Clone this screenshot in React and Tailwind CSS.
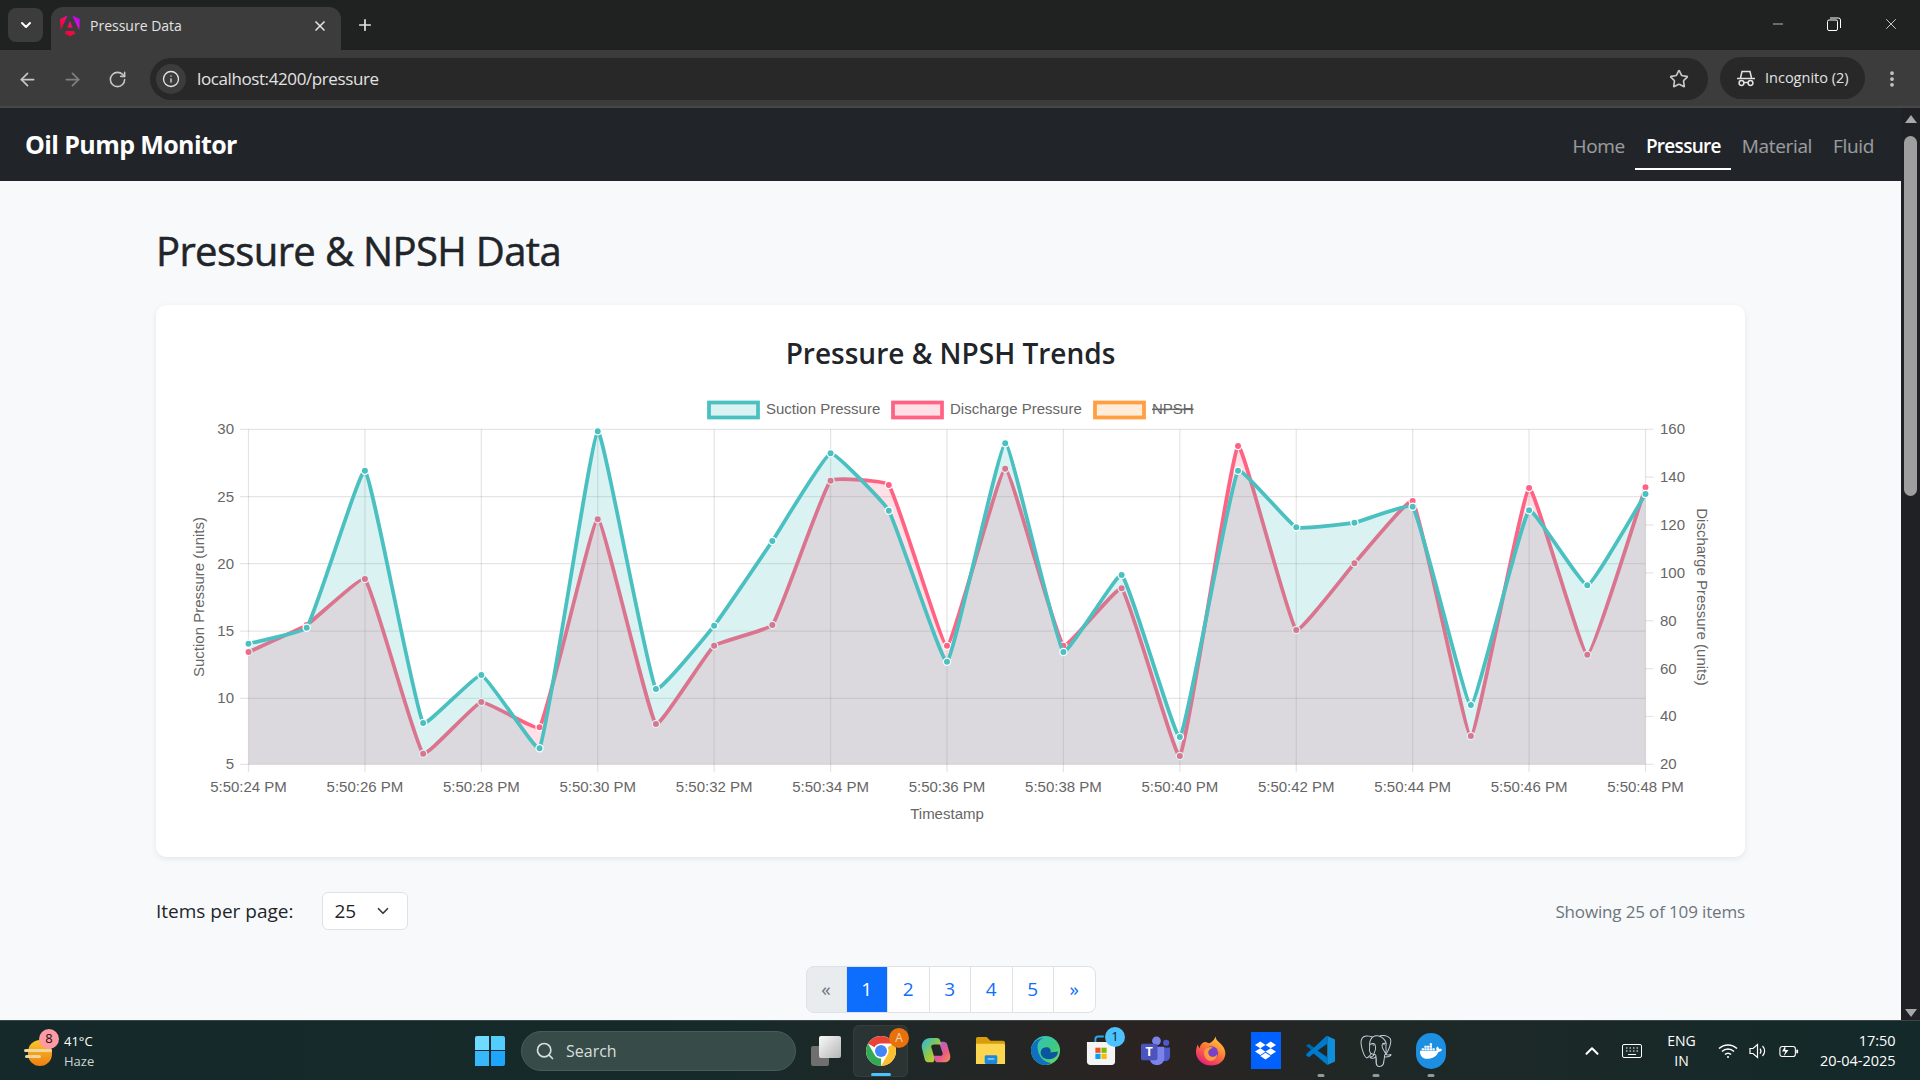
import React from 'react';
import {
  ArrowLeft, ArrowRight, RotateCw, Info, Star, MoreVertical, X, Plus, ChevronDown, ChevronUp, Minus, Search,
} from 'lucide-react';
import { FaDropbox, FaDocker } from 'react-icons/fa';
import { SiPostgresql } from 'react-icons/si';

const suction = [761, 713, 242, 999, 855, 1075, 124, 897, 707, 453, 190, 362, 815, 160, 786, 555, 1041, 242, 412, 398, 350, 945, 361, 586, 312];
const discharge = [786, 705, 567, 1091, 936, 1012, 388, 1002, 767, 705, 272, 285, 767, 236, 767, 595, 1098, 168, 720, 520, 333, 1038, 294, 794, 292];

const LEFT = 248.5;
const RIGHT = 1645.5;
const TOP = 429.3;
const BOTTOM = 764.3;
const STEP = (RIGHT - LEFT) / 24;

const toPoints = (vals) => vals.map((v, i) => [LEFT + i * STEP, 390 + v / 3]);

// same spline as the chart lib, low tension
const linePath = (pts, t = 0.1) => {
  const ctrl = pts.map((p, i) => {
    const a = pts[i - 1] || p;
    const b = pts[i + 1] || p;
    const d01 = Math.hypot(p[0] - a[0], p[1] - a[1]);
    const d12 = Math.hypot(b[0] - p[0], b[1] - p[1]);
    const s = d01 + d12 || 1;
    const fa = (t * d01) / s;
    const fb = (t * d12) / s;
    return {
      prev: [p[0] - fa * (b[0] - a[0]), p[1] - fa * (b[1] - a[1])],
      next: [p[0] + fb * (b[0] - a[0]), p[1] + fb * (b[1] - a[1])],
    };
  });
  let d = `M${pts[0][0]} ${pts[0][1]}`;
  for (let i = 1; i < pts.length; i++) {
    d += ` C${ctrl[i - 1].next[0]} ${ctrl[i - 1].next[1]} ${ctrl[i].prev[0]} ${ctrl[i].prev[1]} ${pts[i][0]} ${pts[i][1]}`;
  }
  return d;
};

const Series = ({ vals, color, fill }) => {
  const pts = toPoints(vals);
  const d = linePath(pts);
  return (
    <g>
      <path d={`${d} L${RIGHT} ${BOTTOM} L${LEFT} ${BOTTOM} Z`} fill={fill} />
      <path d={d} fill="none" stroke={color} strokeWidth="3.75" />
      {pts.map((p, i) => (
        <circle key={i} cx={p[0]} cy={p[1]} r="3.6" fill={color} stroke="#fff" strokeWidth="1.25" />
      ))}
    </g>
  );
};

const Chart = () => {
  const yLeft = [[30, 429.3], [25, 496.7], [20, 563.7], [15, 631], [10, 698.3], [5, 764.3]];
  const yRight = [160, 140, 120, 100, 80, 60, 40, 20].map((v, i) => [v, TOP + (i * (BOTTOM - TOP)) / 7]);
  const xTicks = Array.from({ length: 13 }, (_, i) => [LEFT + i * 2 * STEP, `5:50:${24 + i * 2} PM`]);
  const legend = [
    { x: 707, color: '#4bc0c0', fill: '#dbf2f2', label: 'Suction Pressure', tx: 766 },
    { x: 891, color: '#ff6384', fill: '#ffe0e6', label: 'Discharge Pressure', tx: 950 },
    { x: 1093, color: '#ff9f40', fill: '#ffecd9', label: 'NPSH', tx: 1152, off: true },
  ];
  return (
    <svg viewBox="180 390 1542 455" className="block w-[1542px] h-[455px] font-['Liberation_Sans',sans-serif] text-[15px] fill-[#666]">
      {legend.map((l) => (
        <g key={l.label}>
          <rect x={l.x + 2} y="402.5" width="49" height="15" fill={l.fill} stroke={l.color} strokeWidth="3.75" />
          <text x={l.tx} y="414" className={l.off ? 'line-through' : ''}>{l.label}</text>
        </g>
      ))}
      {yLeft.map(([v, y]) => (
        <g key={v}>
          <line x1={240} x2={RIGHT} y1={y} y2={y} stroke="#000" strokeOpacity="0.1" strokeWidth="1.25" />
          <text x="234" y={y + 5} textAnchor="end">{v}</text>
        </g>
      ))}
      {yRight.map(([v, y]) => (
        <g key={v}>
          <line x1={RIGHT} x2={RIGHT + 8} y1={y} y2={y} stroke="#000" strokeOpacity="0.1" strokeWidth="1.25" />
          <text x="1660" y={y + 5}>{v}</text>
        </g>
      ))}
      {xTicks.map(([x, t]) => (
        <g key={t}>
          <line x1={x} x2={x} y1={TOP} y2={BOTTOM + 8} stroke="#000" strokeOpacity="0.1" strokeWidth="1.25" />
          <text x={x} y="792" textAnchor="middle">{t}</text>
        </g>
      ))}
      <Series vals={discharge} color="#ff6384" fill="rgba(255,99,132,0.2)" />
      <Series vals={suction} color="#4bc0c0" fill="rgba(75,192,192,0.2)" />
      <text x="947" y="819" textAnchor="middle">Timestamp</text>
      <text transform="translate(204 597) rotate(-90)" textAnchor="middle">Suction Pressure (units)</text>
      <text transform="translate(1697 597) rotate(90)" textAnchor="middle">Discharge Pressure (units)</text>
    </svg>
  );
};

const AngularIcon = () => (
  <svg viewBox="0 0 223 236" className="w-[20px] h-[22px]">
    <defs>
      <linearGradient id="ng" x1="0" y1="1" x2="1" y2="0">
        <stop offset="0" stopColor="#e40035" />
        <stop offset="0.45" stopColor="#f60a48" />
        <stop offset="0.7" stopColor="#e90ae3" />
        <stop offset="1" stopColor="#8a0cf0" />
      </linearGradient>
    </defs>
    <path fill="url(#ng)" d="M222.077 39.192l-8.019 125.923L137.387 0l84.69 39.192zm-53.105 162.825l-57.933 33.056-57.934-33.056 11.783-28.556h92.301l11.783 28.556zM111.039 62.675l30.357 73.803H80.681l30.358-73.803zM7.937 165.115L0 39.192 84.69 0 7.937 165.115z" />
  </svg>
);

const IncognitoIcon = () => (
  <svg viewBox="0 0 20 20" className="w-[20px] h-[20px]" fill="none" stroke="#e3e3e3" strokeWidth="1.5">
    <path d="M1 10.5h18" />
    <path d="M4.5 10 6 3.5h8l1.5 6.5" />
    <circle cx="5.5" cy="15" r="2.4" />
    <circle cx="14.5" cy="15" r="2.4" />
    <path d="M8 14.5h4" />
  </svg>
);

const TabBar = () => (
  <div className="h-[50px] bg-[#202221] flex shrink-0">
    <div className="ml-2 mt-2 w-[35px] h-[34px] rounded-lg bg-[#3c3c3c] flex items-center justify-center">
      <ChevronDown className="w-4 h-4 text-white" strokeWidth={3} />
    </div>
    <div className="ml-2 mt-[7px] w-[290px] h-[43px] bg-[#3c3c3c] rounded-t-xl flex items-center pl-[9px] pr-[13px] pb-[6px]">
      <AngularIcon />
      <span className="ml-[10px] text-[14px] text-[#e3e3e3]">Pressure Data</span>
      <X className="ml-auto w-[16px] h-[16px] text-[#e3e3e3]" strokeWidth={2.5} />
    </div>
    <div className="ml-[15px] mt-[16px] w-[18px] h-[18px] flex items-center justify-center">
      <Plus className="w-[18px] h-[18px] text-[#e3e3e3]" strokeWidth={2.25} />
    </div>
    <div className="ml-auto flex items-center h-[48px] text-white pr-[20px]">
      <Minus className="w-[16px] h-[16px] mr-[41px]" strokeWidth={1} />
      <svg viewBox="0 0 14 14" className="w-[14px] h-[14px] mr-[41px]" fill="none" stroke="#fff" strokeWidth="1">
        <rect x="0.5" y="3" width="10" height="10.5" rx="1.5" />
        <path d="M3 1h8.5a2 2 0 0 1 2 2v8" />
      </svg>
      <X className="w-[18px] h-[18px]" strokeWidth={1} />
    </div>
  </div>
);

const Toolbar = () => (
  <div className="h-[58px] bg-[#3c3c3c] shrink-0 flex items-start pt-[8px] border-b-2 border-[#484848]">
    <div className="w-[150px] h-[42px] flex items-center text-[#c7c7c7] pl-[17px]">
      <ArrowLeft className="w-[21px] h-[21px]" strokeWidth={2} />
      <ArrowRight className="ml-[24px] w-[21px] h-[21px] text-[#808080]" strokeWidth={2} />
      <RotateCw className="ml-[25px] w-[19px] h-[19px]" strokeWidth={2} />
    </div>
    <div className="w-[1558px] h-[42px] rounded-full bg-[#282828] flex items-center pl-[6px] pr-[19px]">
      <div className="w-[30px] h-[30px] rounded-full bg-[#3c3c3c] flex items-center justify-center">
        <Info className="w-[18px] h-[18px] text-[#e3e3e3]" strokeWidth={1.75} />
      </div>
      <span className="ml-[11px] text-[17px] tracking-[-0.4px] text-[#e3e3e3]">localhost:4200/pressure</span>
      <Star className="ml-auto w-[20px] h-[20px] text-[#c7c7c7]" strokeWidth={2} />
    </div>
    <div className="ml-[12px] w-[145px] h-[42px] -mt-px rounded-full bg-[#282828] flex items-center pl-[16px]">
      <IncognitoIcon />
      <span className="ml-[9px] text-[14.5px] text-[#e3e3e3]">Incognito (2)</span>
    </div>
    <div className="ml-[17px] h-[42px] flex items-center">
      <MoreVertical className="w-[20px] h-[20px] text-[#c7c7c7]" strokeWidth={2.5} />
    </div>
  </div>
);

const NavBar = () => (
  <nav className="h-[73px] bg-[#212529] flex items-center pl-[25px] pr-[16.5px] shrink-0">
    <span className="text-[25px] tracking-[-0.6px] font-bold text-white">Oil Pump Monitor</span>
    <div className="ml-auto flex h-full pt-[20px] pb-[11px] text-[19px] tracking-[-0.35px] text-white/55">
      <a className="px-[10.5px] leading-[36px]">Home</a>
      <a className="px-[10.5px] leading-[36px] font-semibold tracking-[-0.7px] text-white border-b-2 border-white">Pressure</a>
      <a className="px-[10.5px] leading-[36px]">Material</a>
      <a className="px-[10.5px] leading-[36px]">Fluid</a>
    </div>
  </nav>
);

const PageButton = ({ children, active, disabled, first, last }) => (
  <div
    className={`h-[47px] flex items-center justify-center border border-[#dee2e6] -ml-px first:ml-0 ${first ? 'rounded-l-lg w-[41px]' : 'w-[42.5px]'} ${last ? 'rounded-r-lg' : ''} ${
      active ? 'bg-[#0d6efd] border-[#0d6efd] text-white' : disabled ? 'bg-[#e9ecef] text-[#6c757d]' : 'bg-white text-[#0d6efd]'
    }`}
  >
    {children}
  </div>
);

const Content = () => (
  <main className="flex-1 bg-[#f8f9fa] px-[156px] text-[19px] text-[#212529] overflow-hidden">
    <h2 className="mt-[46px] text-[40px] leading-[48px] tracking-[-0.65px] [-webkit-text-stroke:0.5px_#212529]">Pressure &amp; NPSH Data</h2>
    <section className="mt-[30px] h-[552px] bg-white rounded-[10px] shadow-[0_2px_6px_rgba(0,0,0,0.08)] px-[24px] pt-[28px]">
      <h4 className="text-center text-[28px] leading-[40px] font-semibold">Pressure &amp; NPSH Trends</h4>
      <div className="mt-[17px]">
        <Chart />
      </div>
    </section>
    <div className="mt-[35px] flex items-center h-[38px]">
      <span>Items per page:</span>
      <div className="ml-[29px] w-[86px] h-[38px] bg-white border border-[#dee2e6] rounded-[6px] flex items-center pl-[11px]">
        <span>25</span>
        <ChevronDown className="ml-[18px] w-[18px] h-[18px] text-[#343a40]" strokeWidth={2.25} />
      </div>
      <span className="ml-auto pt-[2px] text-[17px] tracking-[-0.15px] text-[#6c757d]">Showing 25 of 109 items</span>
    </div>
    <div className="mt-[36px] flex justify-center">
      <PageButton disabled first>«</PageButton>
      <PageButton active>1</PageButton>
      <PageButton>2</PageButton>
      <PageButton>3</PageButton>
      <PageButton>4</PageButton>
      <PageButton>5</PageButton>
      <PageButton last>»</PageButton>
    </div>
  </main>
);

const Scrollbar = () => (
  <div className="w-[19px] bg-[#202124] flex flex-col items-center shrink-0">
    <div className="mt-[7px] w-0 h-0 border-x-[6px] border-x-transparent border-b-[8px] border-b-[#a8a8a8]" />
    <div className="mt-[13px] w-[13px] h-[360px] rounded-full bg-[#9e9e9e]" />
    <div className="mt-auto mb-[3px] w-0 h-0 border-x-[6px] border-x-transparent border-t-[8px] border-t-[#a8a8a8]" />
  </div>
);

const ChromeIcon = () => (
  <svg viewBox="0 0 48 48" className="w-[36px] h-[36px]">
    <circle cx="24" cy="24" r="20" fill="#fff" />
    <path fill="#ea4335" d="M6.68 14A20 20 0 0 1 41.32 14H24A10 10 0 0 0 15.34 19Z" />
    <path fill="#fbc02d" transform="rotate(120 24 24)" d="M6.68 14A20 20 0 0 1 41.32 14H24A10 10 0 0 0 15.34 19Z" />
    <path fill="#34a853" transform="rotate(240 24 24)" d="M6.68 14A20 20 0 0 1 41.32 14H24A10 10 0 0 0 15.34 19Z" />
    <circle cx="24" cy="24" r="8" fill="#4285f4" />
  </svg>
);

const CopilotIcon = () => (
  <svg viewBox="0 0 32 32" className="w-[30px] h-[30px]">
    <defs>
      <linearGradient id="cp1" x1="0" y1="0" x2="1" y2="1">
        <stop offset="0" stopColor="#22b8f0" />
        <stop offset="0.5" stopColor="#8cc84b" />
        <stop offset="1" stopColor="#f5c518" />
      </linearGradient>
      <linearGradient id="cp2" x1="0" y1="0" x2="1" y2="1">
        <stop offset="0" stopColor="#8f6de8" />
        <stop offset="0.6" stopColor="#e8598c" />
        <stop offset="1" stopColor="#f59342" />
      </linearGradient>
    </defs>
    <path fill="url(#cp2)" d="M19 6h5c2 0 3.500 1 4 3l3 11c1 4-1 8-5 8h-8c-2 0-3-1-3.500-3l-1-4h7c2 0 3-1 2.500-3z" />
    <path fill="url(#cp1)" d="M10 2h7c2 0 3 1 3.500 3l1 4H14c-2 0-3.500 1-3 3l3 10c.5 2 .5 4-1 6H8c-2 0-3.500-1-4-3L1 13C0 8 3 2 10 2z" />
  </svg>
);

const FolderIcon = () => (
  <svg viewBox="0 0 32 32" className="w-[31px] h-[33px]">
    <path fill="#d69e0b" d="M1 4c0-1 .7-2 2-2h9l4 4h13c1 0 2 1 2 2v6H1z" />
    <path fill="#fdd651" d="M1 9h28c1 0 2 1 2 2v19H1z" />
    <rect x="10" y="21" width="13" height="9" rx="1.500" fill="#1e88d8" />
    <rect x="13" y="24" width="7" height="1.500" fill="#8ed0f5" />
  </svg>
);

const EdgeIcon = () => (
  <svg viewBox="0 0 32 32" className="w-[31px] h-[31px]">
    <defs>
      <linearGradient id="ed" x1="0" y1="0" x2="1" y2="1">
        <stop offset="0" stopColor="#35c1c9" />
        <stop offset="0.6" stopColor="#3cca80" />
        <stop offset="1" stopColor="#7ad86a" />
      </linearGradient>
    </defs>
    <circle cx="16" cy="16" r="15" fill="url(#ed)" />
    <path fill="#0f6fc0" d="M1 16C1 8 8 3 14 3c-5 2-7 6-6 12 .8 7 6 13 14 14-2 1-4 2-6 2C8 31 1 24 1 16z" />
    <path fill="#0b54a0" d="M27 22c-3 3-8 4-12 2-4-2-5-6-3-9 1-2 4-3 7-2 2 1 3 3 2 5l8-1c-1 2 0 3-2 5z" />
  </svg>
);

const StoreIcon = () => (
  <svg viewBox="0 0 32 32" className="w-[30px] h-[33px]">
    <path d="M10 8V4a3 3 0 0 1 3-3h6" fill="none" stroke="#2ea7e8" strokeWidth="2" />
    <path fill="#f4f4f4" d="M1 7h30v21c0 2-1.500 3.500-3.500 3.500h-23C2.500 31.500 1 30 1 28z" />
    <rect x="10" y="13" width="5.500" height="5.500" fill="#f25022" />
    <rect x="16.500" y="13" width="5.500" height="5.500" fill="#7fba00" />
    <rect x="10" y="19.500" width="5.500" height="5.500" fill="#00a4ef" />
    <rect x="16.500" y="19.500" width="5.500" height="5.500" fill="#ffb900" />
  </svg>
);

const TeamsIcon = () => (
  <svg viewBox="0 0 32 32" className="w-[31px] h-[31px]">
    <circle cx="17" cy="6" r="4.500" fill="#7b83eb" />
    <circle cx="27" cy="8" r="3.200" fill="#5059c9" />
    <path fill="#5059c9" d="M21 13h10v9c0 3-2 5-5 5s-5-2-5-5z" />
    <path fill="#7b83eb" d="M10 12h15v12c0 4-3 7-7.500 7S10 28 10 24z" />
    <rect x="1" y="9" width="17" height="17" rx="2" fill="#4b53bc" />
    <text x="9.500" y="22" textAnchor="middle" fill="#fff" fontSize="13" fontWeight="700" fontFamily="Open Sans">T</text>
  </svg>
);

const FirefoxIcon = () => (
  <svg viewBox="0 0 32 32" className="w-[31px] h-[34px]">
    <defs>
      <linearGradient id="ff" x1="0.8" y1="0" x2="0.2" y2="1">
        <stop offset="0" stopColor="#ffd43a" />
        <stop offset="0.5" stopColor="#ff7139" />
        <stop offset="1" stopColor="#e31587" />
      </linearGradient>
    </defs>
    <path fill="url(#ff)" d="M21 1c1 4 3 5 6 8 4 4 5 9 4 12-1 6-7 10-14 10C7 31 1 24 1 17c0-3 1-6 2-8 0 2 1 3 2 4 0-3 2-5 4-6 3-1 3 1 6 1 3-2 5-3 6-7z" />
    <circle cx="17" cy="18" r="7" fill="#7542c8" />
    <path fill="#ff9b3a" d="M10 15c2-3 6-4 9-2-2 0-4 1-5 3-1 3 1 6 4 6 2 0 4-1 5-3 0 4-3 7-7 7-5 0-8-6-6-11z" />
  </svg>
);

const VsCodeIcon = () => (
  <svg viewBox="0 0 32 32" className="w-[31px] h-[33px]">
    <path fill="#0065a9" d="M1 11l3-2 8 6-8 6.500-3-2 5-4.500z" />
    <path fill="#0f8ed9" d="M23 1l7.500 3.500c.5.300.500.700.500 1.200v20.600c0 .5 0 .9-.5 1.200L23 31V1z" />
    <path fill="#007acc" d="M23 1v8L13 16l10 7v8L9 19 4 23 1 21l21-20z" />
  </svg>
);

const AppSlot = ({ children, active, pip }) => (
  <div className={`relative w-[55px] h-[52px] flex items-center justify-center rounded-md ${active ? 'bg-white/[0.06] border border-white/5' : ''}`}>
    {children}
    {pip && <span className={`absolute bottom-0 left-1/2 -translate-x-1/2 h-[3px] rounded-full ${active ? 'w-[20px] bg-[#4cc2ff]' : 'w-[7px] bg-[#8f9a99]'}`} />}
  </div>
);

const Taskbar = () => (
  <footer className="h-[60px] shrink-0 flex items-center border-t border-[#3b4746] bg-[linear-gradient(90deg,#15292a_0%,#172a2a_38%,#2b2322_60%,#1e2826_72%,#13292a_100%)] font-['Open_Sans',sans-serif] text-white">
    <div className="w-[475px] flex items-center pl-[24px]">
      <div className="relative w-[30px] h-[30px]">
        <div className="absolute left-[4px] top-[4px] w-[24px] h-[26px] rounded-full bg-[linear-gradient(#f9c72b,#ee7f11)]" />
        <div className="absolute left-0 top-[13px] w-[28px] h-[3px] rounded-full bg-[#f0d59c]" />
        <div className="absolute left-[1px] top-[19px] w-[16px] h-[3px] rounded-full bg-[#f0d59c]" />
        <div className="absolute left-[15px] -top-[7px] w-[20px] h-[20px] rounded-full bg-[#ff9aa2] text-[#111] text-[13px] flex items-center justify-center">8</div>
      </div>
      <div className="ml-[10px] text-[13px] leading-[20px]">
        <div>41°C</div>
        <div className="text-[#cdd4d3]">Haze</div>
      </div>
    </div>
    <div className="w-[30px] h-[30px] grid grid-cols-2 gap-[1.5px]">
      <div className="bg-[#6fdcff] rounded-tl-[2px]" />
      <div className="bg-[#52cdfc] rounded-tr-[2px]" />
      <div className="bg-[#38b8fb]" />
      <div className="bg-[#1ea6ff] rounded-br-[2px]" />
    </div>
    <div className="ml-[16px] w-[275px] h-[40px] rounded-full bg-[#374b48] border border-[#4a5c59] flex items-center pl-[13px] text-[#d8dedd]">
      <Search className="w-[20px] h-[20px]" strokeWidth={2} />
      <span className="ml-[11px] text-[16px]">Search</span>
    </div>
    <div className="ml-[2px] flex items-center">
      <AppSlot>
        <div className="relative w-[30px] h-[30px]">
          <div className="absolute left-0 bottom-0 w-[18px] h-[20px] rounded-[2px] bg-[#6f6f6f]" />
          <div className="absolute right-0 top-0 w-[22px] h-[22px] rounded-[2px] bg-[linear-gradient(135deg,#fafafa,#b5b5b5)]" />
        </div>
      </AppSlot>
      <AppSlot active pip>
        <ChromeIcon />
        <span className="absolute right-[-2px] top-[2px] w-[20px] h-[20px] rounded-full bg-[#e8710a] text-[#f4d3b5] text-[12px] flex items-center justify-center">A</span>
      </AppSlot>
      <AppSlot><CopilotIcon /></AppSlot>
      <AppSlot><FolderIcon /></AppSlot>
      <AppSlot><EdgeIcon /></AppSlot>
      <AppSlot>
        <StoreIcon />
        <span className="absolute right-[3px] top-[2px] w-[20px] h-[20px] rounded-full bg-[#4cc2ff] text-[#10252a] text-[13px] flex items-center justify-center">1</span>
      </AppSlot>
      <AppSlot><TeamsIcon /></AppSlot>
      <AppSlot><FirefoxIcon /></AppSlot>
      <AppSlot>
        <div className="w-[30px] h-[37px] bg-[#0061fe] flex items-center justify-center">
          <FaDropbox className="w-[21px] h-[21px] text-white" />
        </div>
      </AppSlot>
      <AppSlot pip><VsCodeIcon /></AppSlot>
      <AppSlot pip><SiPostgresql className="w-[32px] h-[36px] text-[#c3d0db]" /></AppSlot>
      <AppSlot pip>
        <div className="w-[30px] h-[36px] rounded-full bg-[#1d8fe2] flex items-center justify-center">
          <FaDocker className="w-[22px] h-[22px] text-white" />
        </div>
      </AppSlot>
    </div>
    <div className="ml-[123px] flex items-center">
      <ChevronUp className="w-[22px] h-[22px] text-white" strokeWidth={2.25} />
      <svg viewBox="0 0 20 14" className="ml-[19px] w-[20px] h-[14px]" fill="none" stroke="#fff" strokeWidth="1">
        <rect x="0.5" y="0.5" width="19" height="13" rx="1.500" />
        <path d="M4 4h1.500M7.500 4h1.500M11 4h1.500M14.500 4H16M4 7h1.500M7.500 7h1.500M11 7h1.500M14.500 7H16M6 10.500h8" strokeWidth="1.200" />
      </svg>
      <div className="ml-[11.5px] w-[56px] text-center text-[14px] leading-[20px]">
        <div>ENG</div>
        <div>IN</div>
      </div>
      <svg viewBox="0 0 20 16" className="ml-[8px] w-[20px] h-[16px]" fill="none" stroke="#fff" strokeWidth="1.500">
        <path d="M1 5.500a13 13 0 0 1 18 0M4 8.500a8.500 8.500 0 0 1 12 0M7 11.500a4 4 0 0 1 6 0" />
        <circle cx="10" cy="14" r="1" fill="#fff" stroke="none" />
      </svg>
      <svg viewBox="0 0 20 16" className="ml-[11.5px] w-[20px] h-[16px]" fill="none" stroke="#fff" strokeWidth="1.200">
        <path d="M1 5.500h3L8.500 1.500v13L4 10.500H1z" />
        <path d="M11 5.500a4 4 0 0 1 0 5M13.500 3a7 7 0 0 1 0 10" />
      </svg>
      <svg viewBox="0 0 22 14" className="ml-[10px] w-[20px] h-[14px]" fill="none" stroke="#fff" strokeWidth="1.200">
        <rect x="1" y="2" width="17" height="11" rx="2.500" />
        <path d="M20 5.500v4" strokeWidth="2" />
        <path d="M7 1 3.500 7.500H7L5 13l5.500-7H7z" fill="#fff" stroke="none" />
      </svg>
      <div className="ml-[21px] text-right text-[14.5px] leading-[20px]">
        <div>17:50</div>
        <div>20-04-2025</div>
      </div>
    </div>
  </footer>
);

const App = () => (
  <div className="h-screen flex flex-col overflow-hidden font-['Open_Sans',sans-serif]">
    <TabBar />
    <Toolbar />
    <div className="flex-1 min-h-0 flex">
      <div className="flex-1 min-w-0 flex flex-col">
        <NavBar />
        <Content />
      </div>
      <Scrollbar />
    </div>
    <Taskbar />
  </div>
);

export default App;
